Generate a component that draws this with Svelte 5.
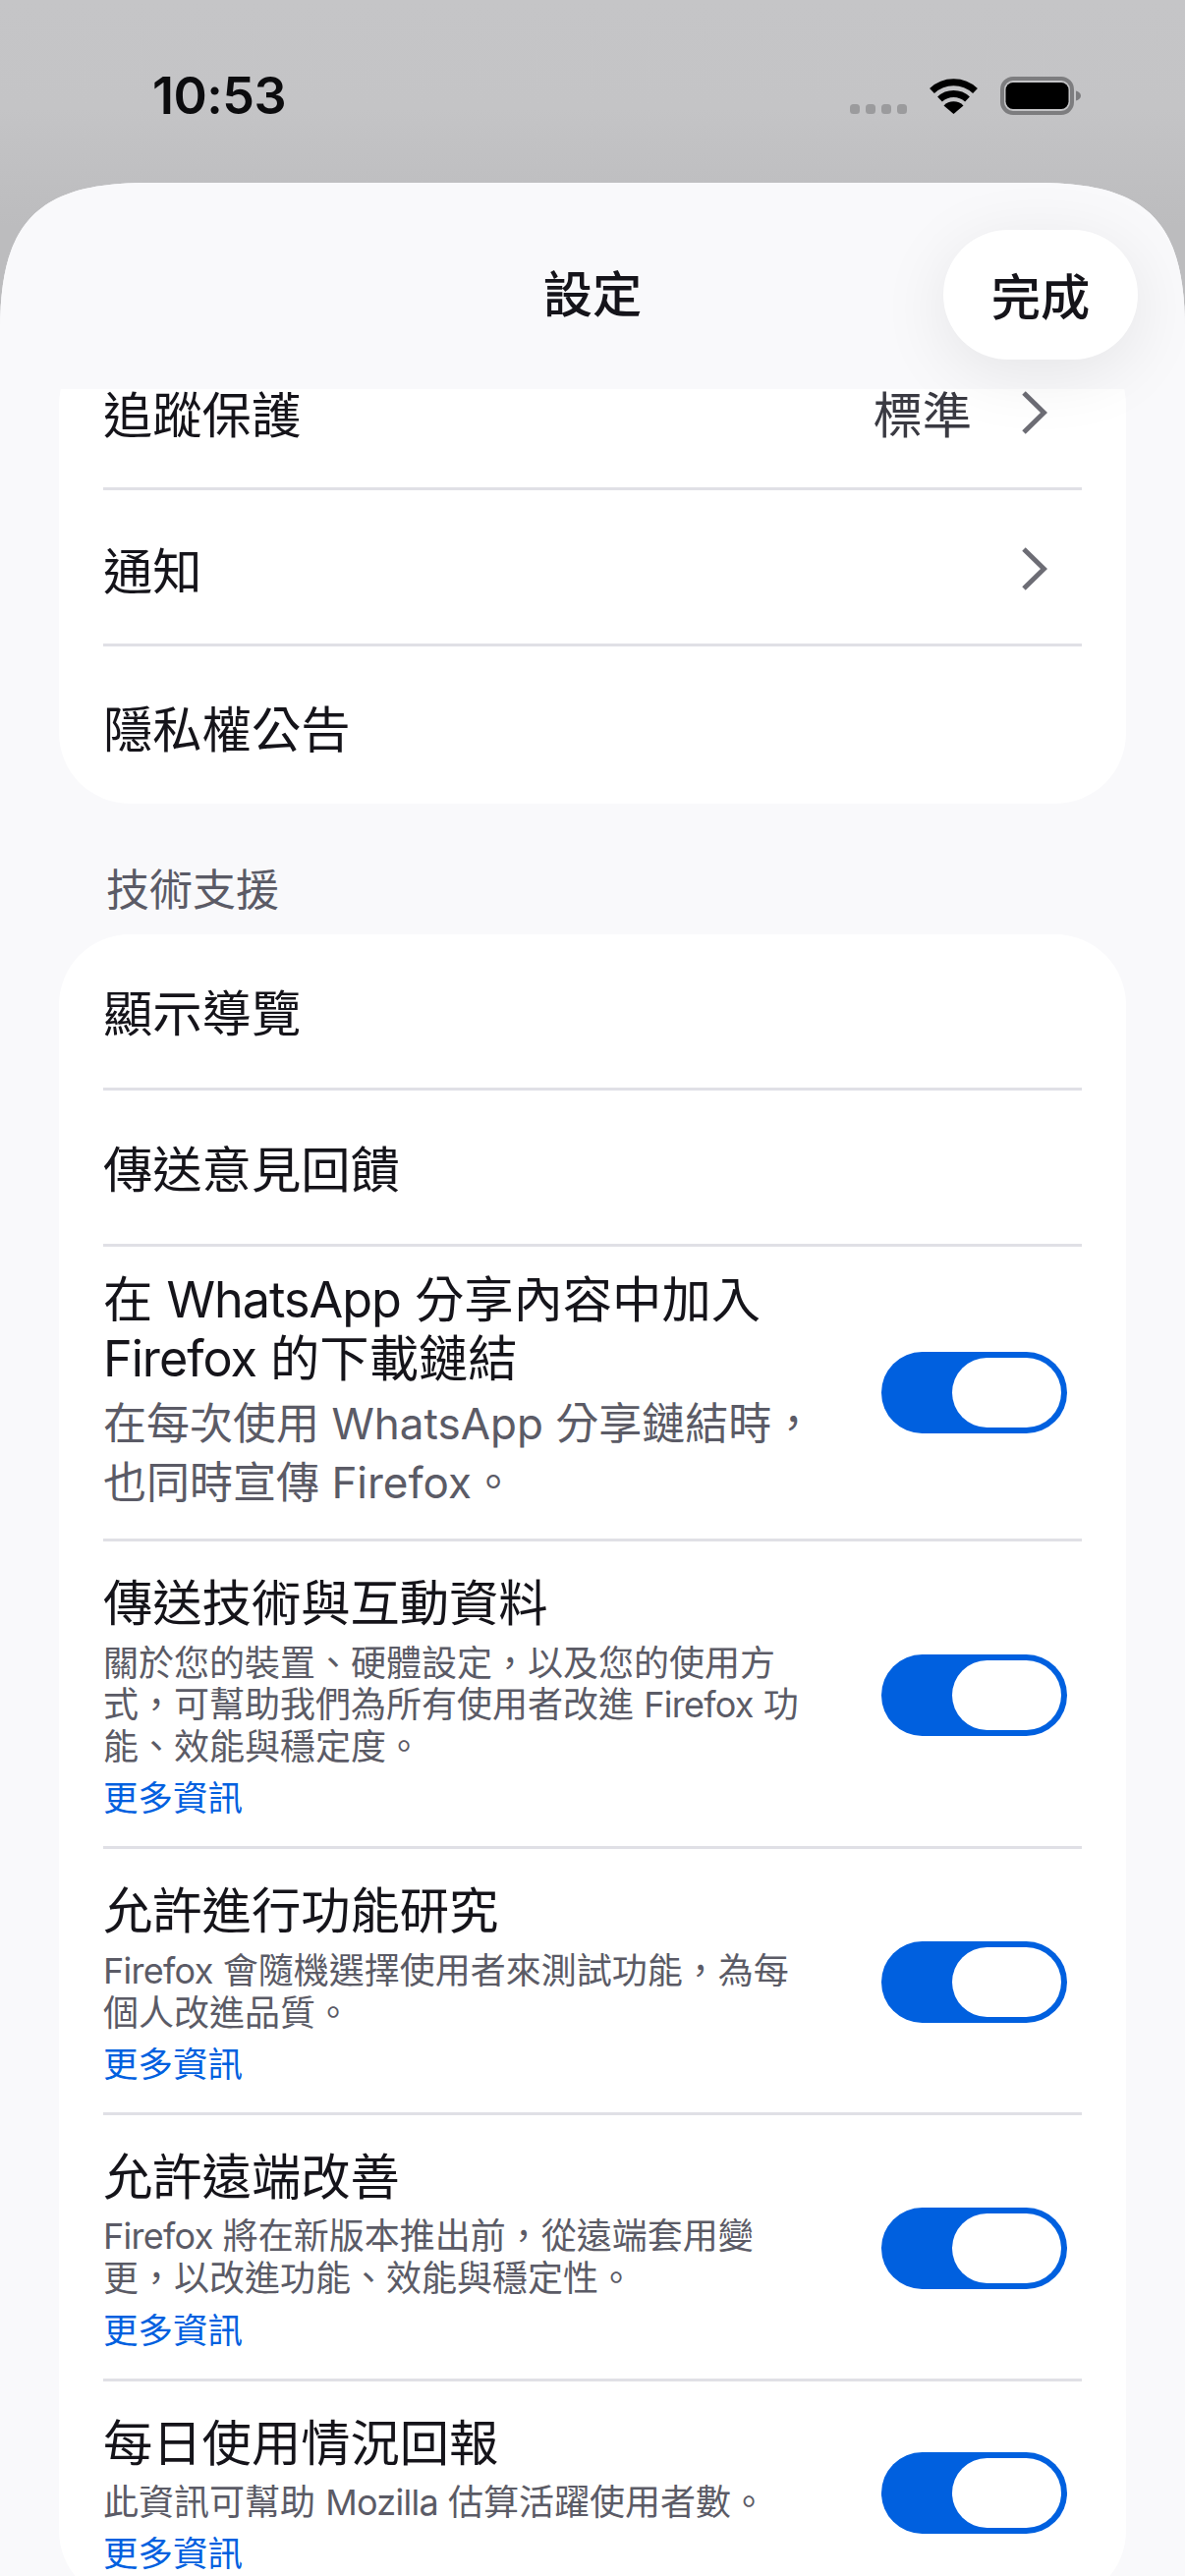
<script>
  const C = '\uFF0C';
  const topRows = [
    { title: '追蹤保護', value: '標準', chevron: true },
    { title: '通知', chevron: true },
    { title: '隱私權公告' }
  ];
  const supportRows = [
    { title: ['顯示導覽'] },
    { title: ['傳送意見回饋'] },
    {
      title: ['在 WhatsApp 分享內容中加入', 'Firefox 的下載鏈結'],
      large: [`在每次使用 WhatsApp 分享鏈結時${C}`, '也同時宣傳 Firefox。'],
      toggle: true
    },
    {
      title: ['傳送技術與互動資料'],
      desc: [`關於您的裝置、硬體設定${C}以及您的使用方`, `式${C}可幫助我們為所有使用者改進 Firefox 功`, '能、效能與穩定度。'],
      more: true,
      toggle: true
    },
    {
      title: ['允許進行功能研究'],
      desc: [`Firefox 會隨機選擇使用者來測試功能${C}為每`, '個人改進品質。'],
      more: true,
      toggle: true
    },
    {
      title: ['允許遠端改善'],
      desc: [`Firefox 將在新版本推出前${C}從遠端套用變`, `更${C}以改進功能、效能與穩定性。`],
      more: true,
      toggle: true
    },
    {
      title: ['每日使用情況回報'],
      desc: ['此資訊可幫助 Mozilla 估算活躍使用者數。'],
      more: true,
      toggle: true
    }
  ];

  // Latin words are tracked tighter than the CJK around them.
  const parts = (line) => line.split(/([A-Za-z]+)/).filter(Boolean);
  const isLatin = (part) => /^[A-Za-z]+$/.test(part);
</script>

{#snippet lines(list)}
  {#each list as line}
    <span class="line">{#each parts(line) as part}{#if isLatin(part)}<span class="latin">{part}</span>{:else}{part}{/if}{/each}</span>
  {/each}
{/snippet}

<div class="screen">
  <div class="status">
    <span class="time">10:53</span>
    <div class="status-icons">
      <div class="dots"><i></i><i></i><i></i><i></i></div>
      <svg class="wifi" width="51" height="37" viewBox="0 0 51 37" aria-hidden="true">
        <path d="M3.5 13.5A32 32 0 0 1 47.5 13.5" fill="none" stroke="#000" stroke-width="7" />
        <path d="M11.5 22A20.5 20.5 0 0 1 39.5 22" fill="none" stroke="#000" stroke-width="7" />
        <path d="M25.5 37L15.5 28.5A14 14 0 0 1 35.5 28.5Z" fill="#000" />
      </svg>
      <svg class="battery" width="82" height="39" viewBox="0 0 82 39" aria-hidden="true">
        <rect x="2" y="2" width="71" height="35" rx="11" fill="none" stroke="#7d7d7f" stroke-width="4" />
        <rect x="5.5" y="6" width="64" height="27" rx="7.5" fill="#000" />
        <path d="M77 14.5C80 15.5 82 17 82 19.5S80 23.5 77 24.5Z" fill="#7d7d7f" />
      </svg>
    </div>
  </div>

  <div class="sheet">
    <header class="header">
      <span></span>
      <h1>設定</h1>
      <button class="done" type="button">完成</button>
    </header>

    <div class="scroller">
      <div class="content">
        <section class="card first">
          {#each topRows as row}
            <div class="row simple">
              <span class="title">{row.title}</span>
              {#if row.value}<span class="value">{row.value}</span>{/if}
              {#if row.chevron}
                <svg class="chevron" width="27" height="46" viewBox="0 0 27 46" aria-hidden="true">
                  <path d="M3 3L23.5 23L3 43" fill="none" stroke="#6d6d75" stroke-width="5" />
                </svg>
              {/if}
            </div>
          {/each}
        </section>

        <h2 class="section-label">技術支援</h2>

        <section class="card">
          {#each supportRows as row}
            <div class="row" class:simple={!row.toggle} class:rich={row.desc} class:tall={row.large}>
              <div class="text">
                <div class="title">{@render lines(row.title)}</div>
                {#if row.large}
                  <div class="large-desc">{@render lines(row.large)}</div>
                {/if}
                {#if row.desc}
                  <div class="desc">{@render lines(row.desc)}</div>
                {/if}
                {#if row.more}<span class="more">更多資訊</span>{/if}
              </div>
              {#if row.toggle}
                <div class="toggle" role="switch" aria-checked="true"><span class="knob"></span></div>
              {/if}
            </div>
          {/each}
        </section>
      </div>
    </div>
  </div>
</div>

<style>
  :global(body) {
    margin: 0;
    background: #bdbdbf;
  }

  .screen {
    position: relative;
    width: 1206px;
    height: 2622px;
    overflow: hidden;
    display: flex;
    flex-direction: column;
    background: linear-gradient(#c5c5c7 0, #c4c4c6 110px, #bcbcbe 230px, #bdbdbf 100%);
    font-family: Inter, "Noto Sans CJK TC", sans-serif;
    color: #15141a;
  }

  .status {
    height: 186px;
    flex: none;
    display: flex;
    justify-content: space-between;
    padding: 70px 106px 0 155px;
    box-sizing: border-box;
  }

  .time {
    font-size: 52px;
    line-height: 56px;
    height: 56px;
    font-weight: 600;
    color: #0c0c0e;
    letter-spacing: -0.5px;
  }

  .status-icons {
    display: flex;
    align-items: flex-start;
    height: 47px;
    margin-top: 8px;
  }

  .dots {
    display: flex;
    gap: 6px;
    margin-top: 28px;
    margin-right: 22px;
  }

  .dots i {
    width: 10px;
    height: 10px;
    border-radius: 3.5px;
    background: #9b9b9d;
  }

  .wifi {
    margin-top: 1px;
    margin-right: 22px;
  }

  .sheet {
    flex: 1;
    min-height: 0;
    display: flex;
    flex-direction: column;
    background: #f9f9fb;
    clip-path: path("M0 150C0 39 39 0 150 0H1056C1167 0 1206 39 1206 150V2436H0Z");
    overflow: hidden;
  }

  .header {
    position: relative;
    z-index: 1;
    flex: none;
    height: 210px;
    display: grid;
    grid-template-columns: 1fr auto 1fr;
    align-items: center;
    padding: 18px 48px 0;
    box-sizing: border-box;
    background: #f9f9fb;
  }

  h1 {
    margin: 0;
    font-size: 50.3px;
    font-weight: 500;
    line-height: 60px;
  }

  .done {
    justify-self: end;
    width: 198px;
    height: 132px;
    padding: 0 0 2px;
    border: 0;
    border-radius: 66px;
    background: #fff;
    box-shadow: 0 14px 70px rgba(0, 0, 0, 0.085);
    font: inherit;
    font-size: 50.3px;
    font-weight: 500;
    color: #15141a;
  }

  .scroller {
    flex: 1;
    min-height: 0;
    overflow: hidden;
  }

  .content {
    margin-top: -56px;
    padding: 0 60px;
  }

  .card {
    background: #fff;
    border-radius: 72px;
    padding: 0 45px;
  }

  .row {
    display: flex;
    align-items: center;
    box-sizing: border-box;
    border-bottom: 3px solid #e0e0e6;
  }

  .row:last-child {
    border-bottom: 0;
  }

  .row.simple {
    height: 159px;
  }

  .row.simple:last-child {
    height: 160px;
  }

  .row.simple .title,
  .row.simple .value {
    margin-top: 6px;
  }

  .first .row.simple .title,
  .first .row.simple .value {
    margin-top: 10px;
  }

  .row.tall {
    height: 300px;
  }

  .row.tall .text {
    margin-top: -3px;
  }

  .row.tall .title {
    margin-bottom: 6px;
  }

  .row.rich {
    padding: 33px 0 27px;
  }

  .row.rich .toggle {
    margin-bottom: 3px;
  }

  .text {
    flex: 1;
    min-width: 0;
  }

  .row.simple > .title {
    flex: 1;
  }

  .title {
    font-size: 50.3px;
    line-height: 60px;
  }

  .line {
    display: block;
    white-space: nowrap;
  }

  .latin {
    letter-spacing: -0.02em;
  }

  .value {
    font-size: 50.3px;
    line-height: 60px;
    color: #3a3a42;
    margin-right: 50px;
  }

  .chevron {
    margin: 3px 35px 0 0;
    flex: none;
  }

  .large-desc {
    font-size: 44px;
    line-height: 60px;
    color: #5b5b66;
  }

  .large-desc .latin {
    letter-spacing: 0;
  }

  .desc {
    font-size: 36px;
    line-height: 42.8px;
    color: #5b5b66;
    margin-top: 9.5px;
  }

  .more {
    display: block;
    font-size: 35.5px;
    line-height: 42px;
    color: #0060df;
    margin-top: 10.5px;
  }

  .toggle {
    flex: none;
    width: 189px;
    height: 83px;
    margin-right: 15px;
    box-sizing: border-box;
    padding: 6px;
    display: flex;
    justify-content: flex-end;
    border-radius: 42px;
    background: #0060df;
  }

  .knob {
    display: block;
    width: 111px;
    height: 71px;
    border-radius: 36px;
    background: #fff;
  }

  .section-label {
    margin: 62px 0 19px;
    padding-left: 48px;
    font-size: 44px;
    font-weight: 400;
    line-height: 52px;
    color: #5b5b66;
  }
</style>
